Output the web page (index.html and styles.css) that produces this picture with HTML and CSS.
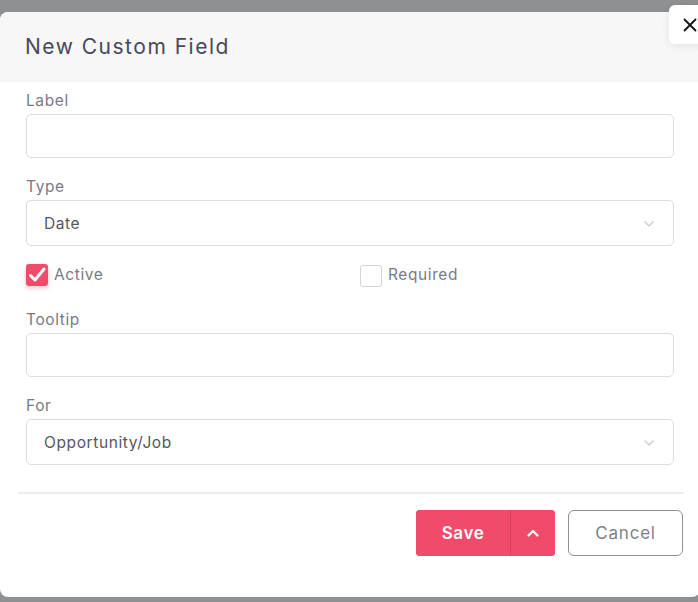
FILE: index.html
```html
<!DOCTYPE html>
<html>
<head>
<meta charset="utf-8">
<link rel="stylesheet" href="styles.css">
</head>
<body>
<div class="overlay">
  <div class="modal">
    <div class="modal-header">
      <h2 class="title">New Custom Field</h2>
    </div>
    <button class="close" aria-label="Close">
      <svg width="14" height="14" viewBox="0 0 14 14"><path d="M1.5 1.5L12.5 12.5M12.5 1.5L1.5 12.5" stroke="#111" stroke-width="1.8" stroke-linecap="round"/></svg>
    </button>
    <div class="modal-body">
      <div class="field">
        <label class="label">Label</label>
        <div class="input"></div>
      </div>
      <div class="field">
        <label class="label">Type</label>
        <div class="select">
          <span>Date</span>
          <svg class="chev" width="12" height="8" viewBox="0 0 12 8"><path d="M1.5 1.5L6 6L10.5 1.5" fill="none" stroke="#c8c8d0" stroke-width="1.2"/></svg>
        </div>
      </div>
      <div class="checks">
        <div class="check">
          <span class="box checked">
            <svg width="18" height="16" viewBox="0 0 18 16"><path d="M2.5 8.5L7 13L16 2" fill="none" stroke="#fff" stroke-width="3" stroke-linecap="round" stroke-linejoin="round"/></svg>
          </span>
          <span class="check-text">Active</span>
        </div>
        <div class="check">
          <span class="box"></span>
          <span class="check-text">Required</span>
        </div>
      </div>
      <div class="field">
        <label class="label">Tooltip</label>
        <div class="input"></div>
      </div>
      <div class="field">
        <label class="label">For</label>
        <div class="select">
          <span>Opportunity/Job</span>
          <svg class="chev" width="12" height="8" viewBox="0 0 12 8"><path d="M1.5 1.5L6 6L10.5 1.5" fill="none" stroke="#c8c8d0" stroke-width="1.2"/></svg>
        </div>
      </div>
    </div>
    <div class="divider"></div>
    <div class="footer">
      <div class="split">
        <button class="save">Save</button>
        <button class="caret" aria-label="More">
          <svg width="12" height="8" viewBox="0 0 12 8"><path d="M1.5 6.5L6 2L10.5 6.5" fill="none" stroke="#fff" stroke-width="2.2" stroke-linecap="round" stroke-linejoin="round"/></svg>
        </button>
      </div>
      <button class="cancel">Cancel</button>
    </div>
  </div>
</div>
</body>
</html>
```
FILE: styles.css
```css
html, body {
  margin: 0;
  padding: 0;
  height: 100%;
  overflow: hidden;
}
body {
  background: #8e9092;
  font-family: "Inter", "Open Sans", sans-serif;
}
.overlay {
  padding-top: 12px;
}
.modal {
  position: relative;
  width: 700px;
  background: #fff;
  border-radius: 8px;
  padding-bottom: 41px;
}
.modal-header {
  height: 70px;
  background: #f7f7f7;
  border-radius: 8px 8px 0 0;
  display: flex;
  align-items: center;
  padding-left: 25px;
}
.title {
  margin: 0;
  font-size: 21px;
  font-weight: 400;
  color: #48485c;
  letter-spacing: 1.5px;
  margin-top: -2px;
}
.close {
  position: absolute;
  top: -7px;
  left: 669px;
  width: 40px;
  height: 39px;
  border: none;
  background: #fff;
  border-radius: 6px;
  box-shadow: 0 2px 8px rgba(0,0,0,0.08);
  padding: 0 0 0 14px;
  display: flex;
  align-items: center;
  cursor: pointer;
}
.modal-body {
  padding: 10px 26px 0 26px;
  width: 648px;
}
.field {
  display: flex;
  flex-direction: column;
  gap: 4px;
  margin-bottom: 20px;
}
.label {
  font-size: 15.5px;
  line-height: 18px;
  letter-spacing: 0.6px;
  color: #7a7a84;
}
.input {
  height: 42px;
  border: 1px solid #dcdce2;
  border-radius: 5px;
}
.select {
  height: 44px;
  border: 1px solid #dcdce2;
  border-radius: 5px;
  display: flex;
  align-items: center;
  justify-content: space-between;
  padding: 0 18px 0 17px;
  font-size: 15.5px;
  letter-spacing: 0.6px;
  color: #55555f;
}
.chev {
  margin-top: 2px;
}
.field:nth-child(2) {
  margin-bottom: 18px;
}
.checks {
  display: grid;
  grid-template-columns: 1fr 1fr;
  column-gap: 20px;
  margin-bottom: 25px;
}
.check {
  display: flex;
  align-items: center;
  gap: 6px;
  height: 22px;
}
.box {
  width: 20px;
  height: 20px;
  border: 1px solid #d4d4da;
  border-radius: 3px;
  display: flex;
  align-items: center;
  justify-content: center;
}
.box.checked {
  width: 22px;
  height: 22px;
  border: none;
  background: #f04b6a;
  box-shadow: 0 2px 5px rgba(240,75,106,0.35);
}
.check:last-child .box {
  margin-top: 2px;
}
.check-text {
  font-size: 15.5px;
  letter-spacing: 0.6px;
  color: #7a7a84;
  margin-top: -1px;
}
.field:last-child {
  margin-bottom: 0;
}
.divider {
  height: 2px;
  background: #ebebf0;
  margin: 27px 16px 0 18px;
}
.footer {
  display: flex;
  justify-content: flex-end;
  gap: 13px;
  padding: 16px 17px 0 0;
}
.split {
  display: flex;
  height: 46px;
  border-radius: 4px;
  overflow: hidden;
  background: #f04b6a;
}
.save {
  width: 95px;
  border: none;
  background: #f04b6a;
  color: #fff;
  font-family: inherit;
  font-size: 17px;
  font-weight: 600;
  letter-spacing: 0.6px;
  border-right: 1px solid #d9405d;
  cursor: pointer;
}
.caret {
  width: 44px;
  border: none;
  background: #f04b6a;
  display: flex;
  align-items: center;
  justify-content: center;
  cursor: pointer;
}
.cancel {
  width: 115px;
  height: 46px;
  border: 1px solid #8f8f96;
  border-radius: 6px;
  background: #fff;
  color: #7f7f88;
  font-family: inherit;
  font-size: 17px;
  letter-spacing: 0.8px;
  cursor: pointer;
}
```
